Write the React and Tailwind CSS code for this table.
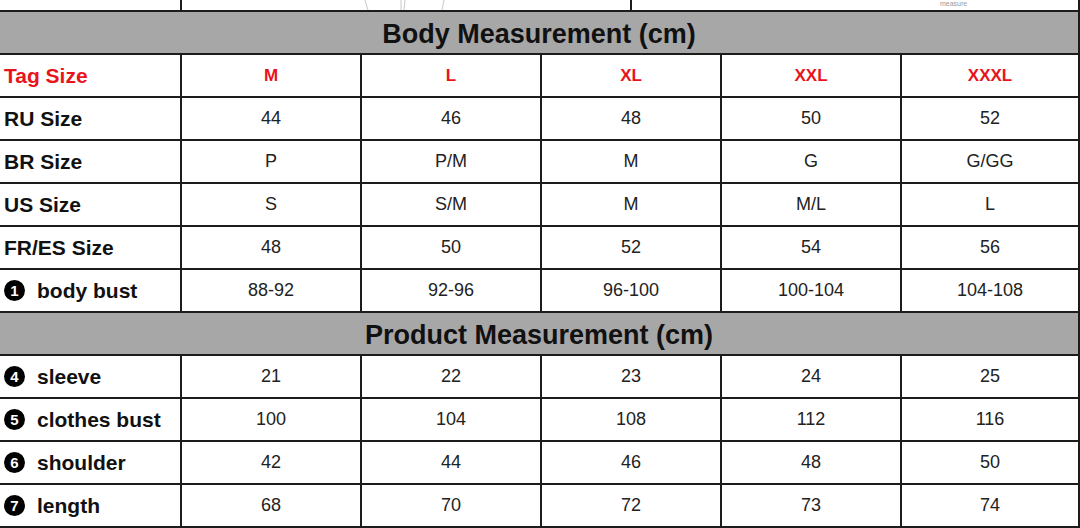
import React from "react";

const sizes = ["M", "L", "XL", "XXL", "XXXL"];

const bodyRows = [
  { label: "RU Size", vals: ["44", "46", "48", "50", "52"] },
  { label: "BR Size", vals: ["P", "P/M", "M", "G", "G/GG"] },
  { label: "US Size", vals: ["S", "S/M", "M", "M/L", "L"] },
  { label: "FR/ES Size", vals: ["48", "50", "52", "54", "56"] },
  { label: "body bust", icon: "1", vals: ["88-92", "92-96", "96-100", "100-104", "104-108"] },
];

const productRows = [
  { label: "sleeve", icon: "4", vals: ["21", "22", "23", "24", "25"] },
  { label: "clothes bust", icon: "5", vals: ["100", "104", "108", "112", "116"] },
  { label: "shoulder", icon: "6", vals: ["42", "44", "46", "48", "50"] },
  { label: "length", icon: "7", vals: ["68", "70", "72", "73", "74"] },
];

const font = { fontFamily: '"Liberation Sans", Arial, sans-serif' };

function Row({ label, icon, vals, red }) {
  return (
    <div className="flex h-[43px] border-t-2 border-[#1c1c1c]">
      <div
        className={`w-[180px] shrink-0 flex items-center pl-[4px] font-bold text-[21px] ${
          red ? "text-[#e8141c]" : "text-[#111]"
        }`}
      >
        {icon && (
          <span className="w-[33px] shrink-0 flex items-center">
            <span className="w-[21px] h-[21px] rounded-full bg-black text-white text-[15px] font-bold leading-none flex items-center justify-center">
              {icon}
            </span>
          </span>
        )}
        <span>{label}</span>
      </div>
      {vals.map((v, i) => (
        <div
          key={i}
          className={`${i === 4 ? "w-[178px]" : "w-[180px]"} shrink-0 border-l-2 border-[#1c1c1c] flex items-center justify-center ${
            red ? "text-[17px] font-bold text-[#e8141c]" : "text-[18px] text-[#222]"
          }`}
        >
          {v}
        </div>
      ))}
    </div>
  );
}

function Header({ title }) {
  return (
    <div className="h-[43px] border-t-2 border-[#1c1c1c] bg-[#a7a7a7] flex items-center justify-center pt-[3px] text-[27px] font-bold text-[#111]">
      {title}
    </div>
  );
}

export default function App() {
  return (
    <div className="w-[1080px] h-[528px] bg-white overflow-hidden" style={font}>
      <div className="w-[1080px] border-r-2 border-[#1c1c1c] border-b-2">
        <div className="flex h-[10px] relative">
          <div className="w-[180px] shrink-0" />
          <div className="w-[450px] shrink-0 border-l-2 border-[#1c1c1c] relative">
            <svg className="absolute left-0 top-0" width="450" height="10">
              <line x1="183" y1="0" x2="186" y2="10" stroke="#c8c8c8" strokeWidth="1" />
              <line x1="219" y1="0" x2="219" y2="10" stroke="#c8c8c8" strokeWidth="1" />
              <line x1="223" y1="0" x2="222" y2="10" stroke="#c8c8c8" strokeWidth="1" />
              <line x1="262" y1="0" x2="260" y2="10" stroke="#c8c8c8" strokeWidth="1" />
            </svg>
          </div>
          <div className="flex-1 border-l-2 border-[#1c1c1c] relative">
            <div className="absolute left-[308px] top-0 text-[7px] text-[#9a9a9a] leading-none">measure</div>
          </div>
        </div>
        <Header title="Body Measurement (cm)" />
        <Row label="Tag Size" vals={sizes} red />
        {bodyRows.map((r) => (
          <Row key={r.label} {...r} />
        ))}
        <Header title="Product Measurement (cm)" />
        {productRows.map((r) => (
          <Row key={r.label} {...r} />
        ))}
      </div>
    </div>
  );
}
